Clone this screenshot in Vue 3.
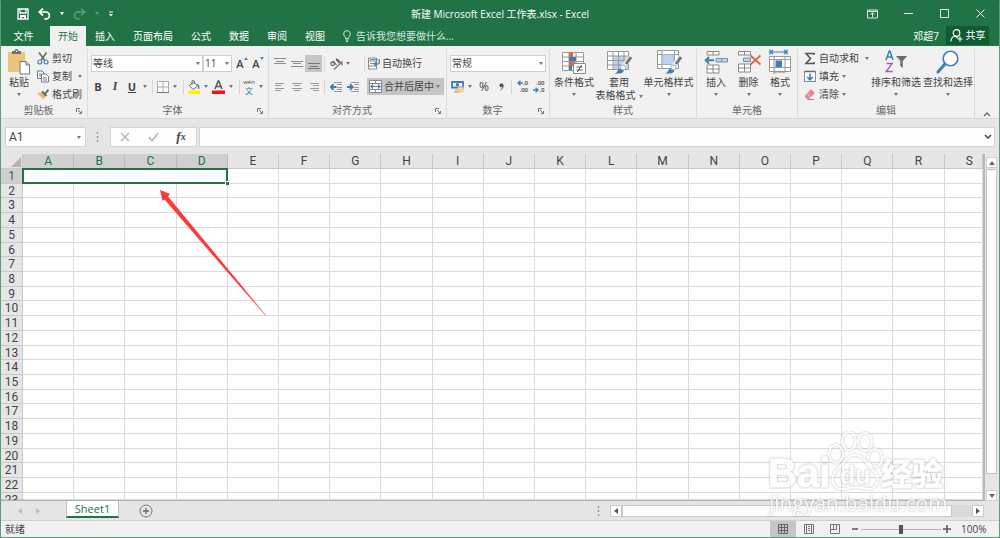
<script setup>
import { ref } from 'vue'

const menuTabs = ['文件', '开始', '插入', '页面布局', '公式', '数据', '审阅', '视图']
const activeTab = ref('开始')
const columns = 'ABCDEFGHIJKLMNOPQRS'.split('')
const rowCount = 23
const isSelectedColumn = (c) => c < 4
const fontName = ref('等线')
const fontSize = ref('11')
const numberFormat = ref('常规')
const formula = ref('')
const cellName = ref('A1')
const zoomLevel = ref(100)
</script>

<template>
  <div class="window">
    <header class="titlebar">
      <div class="quick">
        <button aria-label="保存">
          <svg width="12" height="12" viewBox="0 0 12 12"><path d="M1 1h10v10H1zM3 1v4h6V1" fill="none" stroke="#fff" stroke-width="1.3" /><path d="M3 7h6v4H7V9H5v2H3z" fill="#fff" /></svg>
        </button>
        <button aria-label="撤消">
          <svg width="13" height="12" viewBox="0 0 13 12"><path d="M2 4h6a3.4 3.4 0 0 1 0 6.800H6.500" fill="none" stroke="#fff" stroke-width="1.700" /><path d="M5 .5 1.200 4 5 7.500" fill="none" stroke="#fff" stroke-width="1.700" /></svg>
        </button>
        <button class="caret light" aria-label="撤消列表"></button>
        <button class="faded" aria-label="恢复">
          <svg width="13" height="12" viewBox="0 0 13 12"><path d="M11 4H5a3.400 3.400 0 0 0 0 6.800h1.500M8 .5 11.800 4 8 7.500" fill="none" stroke="#fff" stroke-width="1.400" /></svg>
        </button>
        <button class="caret light faded" aria-label="恢复列表"></button>
        <button aria-label="自定义快速访问工具栏">
          <svg width="6" height="6" viewBox="0 0 6 6"><path d="M1 1h4" stroke="#fff" /><path d="M1 3h4L3 5.500z" fill="#fff" /></svg>
        </button>
      </div>
      <h1>新建 Microsoft Excel 工作表.xlsx - Excel</h1>
      <div class="controls">
        <button aria-label="功能区显示选项">
          <svg width="11" height="10" viewBox="0 0 11 10"><path d="M.5 1h10v8H.5zM.5 2.500h10M5.500 8V4M3.500 5.700l2-2 2 2" fill="none" stroke="#dcebe3" /></svg>
        </button>
        <button aria-label="最小化">
          <svg width="9" height="10" viewBox="0 0 9 10"><path d="M0 4.500h9" stroke="#dcebe3" /></svg>
        </button>
        <button aria-label="最大化">
          <svg width="9" height="10" viewBox="0 0 9 10"><path d="M.5.500h8v8h-8z" fill="none" stroke="#dcebe3" /></svg>
        </button>
        <button aria-label="关闭">
          <svg width="9" height="10" viewBox="0 0 9 10"><path d="m.5.500 8 8m0-8-8 8" stroke="#e6f1eb" /></svg>
        </button>
      </div>
    </header>

    <nav class="tabs">
      <button v-for="tab in menuTabs" :key="tab" :class="{ active: tab === activeTab, file: tab === '文件' }" @click="activeTab = tab">{{ tab }}</button>
      <button class="tell">
        <svg width="8" height="12" viewBox="0 0 8 12"><path d="M2.500 8.500C2.500 6.500.7 6 .7 3.900a3.300 3.300 0 0 1 6.600 0c0 2.100-1.800 2.600-1.800 4.600zM2.500 10h3M3 11.500h2" fill="none" stroke="#d4e6db" /></svg>
        告诉我您想要做什么...
      </button>
      <span class="user">邓超7</span>
      <button class="share">
        <svg width="13" height="13" viewBox="0 0 13 13"><circle cx="6.500" cy="4" r="3.300" fill="none" stroke="#fff" stroke-width="1.200" /><path d="M.8 12.500c.3-3 1.700-5 4.200-5.500l3 2M10 7.500v5M7.500 10H12.500" fill="none" stroke="#fff" stroke-width="1.200" /></svg>
        共享
      </button>
    </nav>

    <section class="ribbon">
      <div class="group">
        <div class="body clipboard">
          <button class="big">
            <svg width="24" height="26" viewBox="0 0 24 26"><rect x="1" y="3" width="17" height="20" rx="1" fill="#ecc57c" /><path d="M5 2h2.500a2 2 0 0 1 4 0H14v3H5z" fill="#707070" /><circle cx="9.500" cy="2.300" r=".8" fill="#f1f1f1" /><path d="M13 12.500h6l3.500 3.500v9H13zM19 12.500V16h3.500" fill="#fff" stroke="#777" /></svg>
            <span>粘贴</span><i class="caret"></i>
          </button>
          <div class="stack">
            <button>
              <svg width="12" height="13" viewBox="0 0 12 13"><path d="m2 .5 5.700 7.800M9.500.5 4 8.300" stroke="#666" stroke-width="1.500" /><circle cx="2.800" cy="10" r="2" fill="none" stroke="#4c84bd" stroke-width="1.200" /><circle cx="9" cy="10" r="2" fill="none" stroke="#4c84bd" stroke-width="1.200" /></svg>剪切
            </button>
            <button>
              <svg width="12" height="13" viewBox="0 0 12 13"><path d="M.5 1h4.500l2 2v5.500H.5z" fill="#fff" stroke="#777" /><path d="M4.500 4h4.500l2.500 2.500V12h-7z" fill="#fff" stroke="#777" /><path d="M2 4h2M2 6h2M6 8h4M6 10h4" stroke="#4c84bd" /></svg>复制<i class="caret gap"></i>
            </button>
            <button>
              <svg width="12" height="13" viewBox="0 0 12 13"><path d="m0 5 6.500 6.500 2-4-3-3z" fill="#ecb765" /><path d="m5 3.500 4.500 4.500M8 6l3.500-4.500" fill="none" stroke="#666" stroke-width="2" /></svg>格式刷
            </button>
          </div>
        </div>
        <footer><span>剪贴板</span><button class="launcher" aria-label="剪贴板选项"><svg width="6" height="6" viewBox="0 0 6 6"><path d="M.5 4V.5H4M2 2l3 3M5.500 3v2.500H3" fill="none" stroke="#777" /></svg></button></footer>
      </div>

      <div class="group">
        <div class="body rows">
          <div class="font-one">
            <label class="pick"><select v-model="fontName" aria-label="字体"><option>等线</option><option>宋体</option></select><i class="caret"></i></label>
            <label class="pick"><select v-model="fontSize" aria-label="字号"><option>11</option><option>12</option></select><i class="caret"></i></label>
            <button class="grow" aria-label="增大字号">A<svg width="4" height="4" viewBox="0 0 4 4"><path d="M0 3h4L2 0z" fill="#4b86c0" /></svg></button>
            <button class="grow" aria-label="减小字号">A<svg width="4" height="4" viewBox="0 0 4 4"><path d="M0 0h4L2 3z" fill="#4b86c0" /></svg></button>
          </div>
          <div class="font-two">
            <button class="letter"><b>B</b></button>
            <button class="letter italic"><b>I</b></button>
            <button class="letter under"><b>U</b></button>
            <button class="caret" aria-label="下划线样式"></button>
            <i class="sep"></i>
            <button aria-label="边框"><svg width="12" height="12" viewBox="0 0 12 12"><path d="M.5.5h11v11H.5zM6 .5v11M.5 6h11" fill="#fff" stroke="#aaa" /><path d="M0 11.500h12" stroke="#777" /></svg></button>
            <button class="caret" aria-label="边框样式"></button>
            <i class="sep"></i>
            <button aria-label="填充颜色"><svg width="14" height="14" viewBox="0 0 14 14"><path d="m2.500 5.500 4-3.500 4 4-4.500 3.500z" fill="#fff" stroke="#666" /><path d="M5 5V1.500c0-1.500 2.500-1.500 2.500 0V4" fill="none" stroke="#666" /><path d="M10 4.500c2 .5 2 3 1.500 4.500" fill="none" stroke="#4b86c0" stroke-width="1.500" /><path d="M1 10.500h12V14H1z" fill="#fff200" /></svg></button>
            <button class="caret" aria-label="填充颜色列表"></button>
            <button aria-label="字体颜色"><svg width="13" height="14" viewBox="0 0 13 14"><path d="m3 9 3.200-8h.6L10 9M4 6.500h5" fill="none" stroke="#555" stroke-width="1.500" /><path d="M0 10.500h13V14H0z" fill="#f01414" /></svg></button>
            <button class="caret" aria-label="字体颜色列表"></button>
            <i class="sep"></i>
            <button class="pinyin" aria-label="拼音"><small>wén</small><em>文</em></button>
            <button class="caret" aria-label="拼音选项"></button>
          </div>
        </div>
        <footer><span>字体</span><button class="launcher" aria-label="字体选项"><svg width="6" height="6" viewBox="0 0 6 6"><path d="M.5 4V.5H4M2 2l3 3M5.500 3v2.500H3" fill="none" stroke="#777" /></svg></button></footer>
      </div>

      <div class="group">
        <div class="body rows">
          <div class="align-one">
            <button aria-label="顶端对齐"><svg width="12" height="12" viewBox="0 0 12 12"><path d="M0 .500h12M2 3.500h8M0 5.500h12" stroke="#8a8a8a" /></svg></button>
            <button aria-label="垂直居中"><svg width="12" height="12" viewBox="0 0 12 12"><path d="M0 3.500h12M2 5.500h8M0 8.500h12" stroke="#8a8a8a" /></svg></button>
            <button class="on" aria-label="底端对齐"><svg width="12" height="12" viewBox="0 0 12 12"><path d="M0 5.500h12M2 8.500h8M0 10.500h12" stroke="#777" /></svg></button>
            <i class="sep"></i>
            <button aria-label="方向"><svg width="13" height="12" viewBox="0 0 13 12"><path d="m4 11.500 8-7.500M8.500 4H12v3.500" fill="none" stroke="#777" stroke-width="1.200" /><circle cx="2.700" cy="5.700" r="1.800" fill="none" stroke="#555" stroke-width="1.100" /><path d="m3 3 3.500 4M6 .5l3.500 5M6 2.500c2.500-2 4 .5 2.500 2.500" fill="none" stroke="#555" stroke-width="1.100" /></svg></button>
            <button class="caret" aria-label="方向选项"></button>
            <i></i><i class="sep"></i>
            <button class="wide"><svg width="12" height="13" viewBox="0 0 12 13"><path d="M.5 1h8v11h-8zM.5 4h8M.5 9h8" fill="#fff" stroke="#888" /><path d="M2 2.500h8M2 6.500h5" fill="none" stroke="#888" /><path d="M11.300 2v3.500c0 1-.7 1.500-1.500 1.500H6.500M8.500 4.800l-2.200 2.200 2.200 2.200" fill="none" stroke="#4b86c0" stroke-width="1.300" /></svg>自动换行</button>
          </div>
          <div class="align-two">
            <button aria-label="左对齐"><svg width="10" height="10" viewBox="0 0 10 10"><path d="M0 1.500h9M0 3.500h6M0 6.500h9M0 8.500h6" stroke="#999" /></svg></button>
            <button aria-label="居中"><svg width="10" height="10" viewBox="0 0 10 10"><path d="M0 1.500h10M2 3.500h6M0 6.500h10M2 8.500h6" stroke="#999" /></svg></button>
            <button aria-label="右对齐"><svg width="10" height="10" viewBox="0 0 10 10"><path d="M1 1.500h9M4 3.500h6M1 6.500h9M4 8.500h6" stroke="#999" /></svg></button>
            <i class="sep"></i>
            <button aria-label="减少缩进量"><svg width="12" height="12" viewBox="0 0 12 12"><path d="M4 1.500h8M7 3.500h5M7 6.500h5M7 8.500h5M4 10.500h8" stroke="#999" /><path d="M6.500 6H1M3.500 3.200.8 6l2.700 2.800" fill="none" stroke="#3f7cb8" stroke-width="1.900" /></svg></button>
            <button aria-label="增加缩进量"><svg width="12" height="12" viewBox="0 0 12 12"><path d="M4 1.500h8M7 3.500h5M7 6.500h5M7 8.500h5M4 10.500h8" stroke="#999" /><path d="M0 6h5.500M3 3.200 5.700 6 3 8.800" fill="none" stroke="#3f7cb8" stroke-width="1.900" /></svg></button>
            <i></i>
            <button class="wide on"><svg width="13" height="13" viewBox="0 0 13 13"><path d="M.5.500h12v12H.5zM.5 3.500h12M.5 9.500h12M6.500.500v3M6.500 9.500v3" fill="#fff" stroke="#888" /><path d="M2 6.500h9M4 4.500l-2 2 2 2M9 4.500l2 2-2 2" fill="none" stroke="#3f7cb8" stroke-width="1.200" /></svg>合并后居中<i class="caret near"></i></button>
          </div>
        </div>
        <footer><span>对齐方式</span><button class="launcher" aria-label="对齐选项"><svg width="6" height="6" viewBox="0 0 6 6"><path d="M.5 4V.5H4M2 2l3 3M5.500 3v2.500H3" fill="none" stroke="#777" /></svg></button></footer>
      </div>

      <div class="group">
        <div class="body rows">
          <label class="pick"><select v-model="numberFormat" aria-label="数字格式"><option>常规</option><option>数值</option></select><i class="caret"></i></label>
          <div class="number-two">
            <button aria-label="会计数字格式"><svg width="13" height="12" viewBox="0 0 13 12"><path d="M1 1h11v5.500H1z" fill="#fff" stroke="#3f7cb8" stroke-width="1.800" /><circle cx="6.500" cy="3.700" r="1.700" fill="#3f7cb8" /><path d="M7 5.500h5.500V11H7zM3.500 8.500H8V12H3.500z" fill="#edbd78" /><path d="M7 7.500h5M7 9.500h5" stroke="#f7e4c8" /></svg></button>
            <button class="caret" aria-label="会计格式列表"></button>
            <button class="percent">%</button>
            <button aria-label="千位分隔"><svg width="5" height="8" viewBox="0 0 5 8"><circle cx="2.500" cy="2.300" r="2" fill="#555" /><path d="M4 2.500c0 2-.7 3.500-2.500 4.500" fill="none" stroke="#555" /></svg></button>
            <i class="sep"></i>
            <button class="decimal" aria-label="增加小数位数"><span><svg width="6" height="6" viewBox="0 0 6 6"><path d="M6 3H1M3.500.7 1 3l2.500 2.300" fill="none" stroke="#3f7cb8" stroke-width="1.400" /></svg>.0</span><span>.00</span></button>
            <button class="decimal" aria-label="减少小数位数"><span>.00</span><span><svg width="6" height="6" viewBox="0 0 6 6"><path d="M0 3h5M2.500.7 5 3 2.500 5.300" fill="none" stroke="#3f7cb8" stroke-width="1.400" /></svg>.0</span></button>
          </div>
        </div>
        <footer><span>数字</span><button class="launcher" aria-label="数字选项"><svg width="6" height="6" viewBox="0 0 6 6"><path d="M.5 4V.5H4M2 2l3 3M5.500 3v2.500H3" fill="none" stroke="#777" /></svg></button></footer>
      </div>

      <div class="group">
        <div class="body styles">
          <button class="big">
            <svg width="26" height="26" viewBox="0 0 26 26"><path d="M1.500 3.500h21v18h-21zM1.500 8h21M1.500 12.500h21M1.500 17h21M8 3.500v18M15 3.500v18" fill="#fff" stroke="#999" /><path d="M8 3.500h4V8H8zM8 12.500h6V17H8z" fill="#dd6742" /><path d="M8 8h7v4H8zM8 17h3v4H8z" fill="#3f7cb8" /><path d="M12.500 14.500h12v10h-12z" fill="#fff" stroke="#888" /><path d="M15.500 18h6M15.500 21h6M20.500 16l-4 7" stroke="#555" /></svg>
            <span>条件格式</span><i class="caret"></i>
          </button>
          <button class="big">
            <svg width="26" height="26" viewBox="0 0 26 26"><path d="M1.500 2.500h21v18h-21z" fill="#fff" /><path d="M7 7h15v13H7z" fill="#bed3e9" /><path d="M1.500 2.500h21v18h-21zM1.500 7h21M1.500 11.500h21M1.500 16h21M7 2.500v18M12.500 2.500v18M18 2.500v18" fill="none" stroke="#999" /><path d="m25 8-8 10" stroke="#f1f1f1" stroke-width="5" /><path d="m25 8-5 7" stroke="#777" stroke-width="3" /><path d="M8 24.500c3.500 0 4-5.500 7.500-5.500 2.500 0 3 3 1 4.500s-5 1-8.500 1z" fill="#3f7cb8" /><circle cx="17" cy="18.500" r="2.500" fill="#fff" stroke="#8ab0d6" /></svg>
            <span>套用<br />表格格式<i class="caret inline"></i></span>
          </button>
          <button class="big">
            <svg width="26" height="26" viewBox="0 0 26 26"><path d="M1.500 1.500h21v18h-21zM1.500 5.500h21M1.500 15.500h21M6 1.500v18M18.500 1.500v18" fill="#fff" stroke="#999" /><path d="M6 5.500h12v10H6z" fill="#bed3e9" stroke="#9db4ca" /><path d="m25 8-8 10" stroke="#f1f1f1" stroke-width="5" /><path d="m25 8-5 7" stroke="#777" stroke-width="3" /><path d="M8.500 24.500c3.500 0 4-5.500 7.500-5.500 2.500 0 3 3 1 4.500s-5 1-8.500 1z" fill="#3f7cb8" /><circle cx="17.500" cy="18.500" r="2.500" fill="#fff" stroke="#8ab0d6" /></svg>
            <span>单元格样式</span><i class="caret"></i>
          </button>
        </div>
        <footer class="plain"><span>样式</span></footer>
      </div>

      <div class="group">
        <div class="body cells">
          <button class="big">
            <svg width="24" height="26" viewBox="0 0 24 26"><path d="M3 2.500h12v3.500H3zM9 2.500V6M3 16h12v8H3zM3 20h12M9 16v8" fill="#fff" stroke="#888" /><path d="M12 9.500h11.500v3.500H12zM17.700 9.500V13" fill="#bed3e9" stroke="#6e93b8" /><path d="M10 11.300H2M5 8l-3.300 3.300L5 14.600" fill="none" stroke="#3f7cb8" stroke-width="2" /></svg>
            <span>插入</span><i class="caret"></i>
          </button>
          <button class="big">
            <svg width="24" height="26" viewBox="0 0 24 26"><path d="M1.500 2.500h12v3.500h-12zM7.500 2.500V6M1.500 15h12v8h-12zM1.500 19h12M7.500 15v8" fill="#fff" stroke="#888" /><path d="M6.500 9h7v3.500h-7z" fill="#bed3e9" stroke="#6e93b8" /><path d="m13.500 6.500 10 9m0-9-10 9" stroke="#de6440" stroke-width="1.800" /></svg>
            <span>删除</span><i class="caret"></i>
          </button>
          <button class="big">
            <svg width="24" height="26" viewBox="0 0 24 26"><path d="M2 3h17M2 .5v5M19 .5v5M5 1 2.500 3 5 5M16 1l2.500 2L16 5" fill="none" stroke="#3f7cb8" stroke-width="1.200" /><path d="M1.500 7.500h21v15h-21zM1.500 10.500h21M1.500 18.500h21M6 7.500v15M17 7.500v15" fill="#fff" stroke="#999" /><path d="M7.500 11.500H14V18H7.500z" fill="#3f7cb8" /><path d="M5 24c2 1 3-2 4-1h5c2 0 2 2 4-1" fill="none" stroke="#888" /></svg>
            <span>格式</span><i class="caret"></i>
          </button>
        </div>
        <footer class="plain"><span>单元格</span></footer>
      </div>

      <div class="group">
        <div class="body editing">
          <div class="stack">
            <button><svg width="12" height="13" viewBox="0 0 12 13"><path d="M10 3V1.500H2L6.500 6.500 2 11.500h8V10" fill="none" stroke="#555" stroke-width="1.600" /></svg>自动求和<i class="caret gap"></i></button>
            <button><svg width="12" height="13" viewBox="0 0 12 13"><path d="M.5 1.500h11v10H.5z" fill="#fff" stroke="#888" /><path d="M.5 1.500h11" stroke="#666" stroke-width="1.500" /><path d="M6 3.500V10M3.200 7 6 9.800 8.800 7" fill="none" stroke="#3f7cb8" stroke-width="1.600" /></svg>填充<i class="caret near"></i></button>
            <button><svg width="12" height="13" viewBox="0 0 12 13"><path d="M1 7.500 7 1l4 4-6 6H3L1 9z" fill="#e9859a" /><path d="m3 5.500 4 4" stroke="#f8ccd5" /><path d="M3.500 11.500H10" stroke="#888" /></svg>清除<i class="caret near"></i></button>
          </div>
          <button class="big">
            <svg width="24" height="26" viewBox="0 0 24 26"><path d="m2 11 3.300-9h.6L9 11M3 8h5.500" fill="none" stroke="#3f7cb8" stroke-width="1.500" /><path d="M2.500 14.500h5.700l-6 8h6.500" fill="none" stroke="#9a63b8" stroke-width="1.400" /><path d="M12 7h11l-4.200 5v7l-2.600-2v-5z" fill="#6b6b6b" /><path d="M14.500 8.500 17 12v3" fill="none" stroke="#999" /></svg>
            <span>排序和筛选</span><i class="caret"></i>
          </button>
          <button class="big">
            <svg width="24" height="26" viewBox="0 0 24 26"><path d="m9 15-7 8" stroke="#3f7cb8" stroke-width="3" stroke-linecap="round" /><circle cx="14.500" cy="9.500" r="7.300" fill="#fff" stroke="#3f7cb8" stroke-width="1.600" /></svg>
            <span>查找和选择</span><i class="caret"></i>
          </button>
        </div>
        <footer class="plain"><span>编辑</span></footer>
      </div>
      <button class="collapse" aria-label="折叠功能区"><svg width="8" height="6" viewBox="0 0 8 6"><path d="m1 5 3-3 3 3" fill="none" stroke="#666" stroke-width="1.300" /></svg></button>
    </section>

    <section class="formula">
      <label class="pick name"><input v-model="cellName" aria-label="名称框" /><i class="caret"></i></label>
      <svg class="grip" width="3" height="10" viewBox="0 0 3 10"><path d="M1.500 0v2M1.500 4v2M1.500 8v2" stroke="#999" stroke-width="1.500" /></svg>
      <div class="actions">
        <button aria-label="取消"><svg width="10" height="10" viewBox="0 0 10 10"><path d="m1 1 8 8m0-8-8 8" stroke="#b5b5b5" stroke-width="1.400" /></svg></button>
        <button aria-label="输入"><svg width="11" height="10" viewBox="0 0 11 10"><path d="m1 5 3 3.500L10 1.500" fill="none" stroke="#b5b5b5" stroke-width="1.700" /></svg></button>
        <button class="fx" aria-label="插入函数">f<small>x</small></button>
      </div>
      <label class="entry"><input v-model="formula" aria-label="编辑栏" /><svg width="8" height="6" viewBox="0 0 8 6"><path d="m1 1 3 3 3-3" fill="none" stroke="#555" stroke-width="1.700" /></svg></label>
    </section>

    <main class="sheet">
      <div class="canvas">
        <table>
          <thead>
            <tr>
              <th class="corner" aria-label="全选"><svg width="10" height="10" viewBox="0 0 10 10"><path d="M10 0v10H0z" fill="#b4b4b4" /></svg></th>
              <th v-for="(c, i) in columns" :key="c" scope="col" :class="{ sel: isSelectedColumn(i), partial: i === columns.length - 1 }">{{ c }}</th>
            </tr>
          </thead>
          <tbody>
            <tr v-for="r in rowCount" :key="r">
              <th scope="row" :class="{ sel: r === 1 }">{{ r }}</th>
              <template v-if="r === 1">
                <td class="merged"><i class="handle"></i></td>
                <td v-for="c in 15" :key="c"></td>
              </template>
              <template v-else>
                <td v-for="c in columns" :key="c"></td>
              </template>
            </tr>
          </tbody>
        </table>
        <svg class="arrow" width="108" height="128" viewBox="0 0 108 128">
          <defs><linearGradient id="fade" gradientUnits="userSpaceOnUse" x1="60" y1="70" x2="107" y2="127"><stop offset="0" stop-color="#fb3a3a" /><stop offset=".5" stop-color="#fb3a3a" /><stop offset="1" stop-color="#fb3a3a" stop-opacity=".5" /></linearGradient></defs>
          <path d="m1 1 10 4-2 2.500L107 126l-1 .5L5.500 10.500 3.500 12z" fill="url(#fade)" />
        </svg>
      </div>
      <div class="vscroll">
        <button aria-label="向上滚动"><svg width="6" height="4" viewBox="0 0 6 4"><path d="M0 4h6L3 0z" fill="#666" /></svg></button>
        <div class="thumb"></div>
        <button aria-label="向下滚动"><svg width="6" height="4" viewBox="0 0 6 4"><path d="M0 0h6L3 4z" fill="#666" /></svg></button>
      </div>
    </main>

    <section class="sheetbar">
      <button class="step" aria-label="上一张"><svg width="4" height="6" viewBox="0 0 4 6"><path d="M4 0v6L0 3z" fill="#bcbcbc" /></svg></button>
      <button class="step" aria-label="下一张"><svg width="4" height="6" viewBox="0 0 4 6"><path d="M0 0v6l4-3z" fill="#bcbcbc" /></svg></button>
      <button class="sheet-tab">Sheet1</button>
      <button class="add" aria-label="新工作表"><svg width="14" height="14" viewBox="0 0 14 14"><circle cx="7" cy="7" r="6" fill="none" stroke="#777" /><path d="M7 4v6M4 7h6" stroke="#666" stroke-width="1.300" /></svg></button>
      <svg class="grip" width="3" height="10" viewBox="0 0 3 10"><path d="M1.500 0v2M1.500 4v2M1.500 8v2" stroke="#999" stroke-width="1.500" /></svg>
      <div class="hscroll">
        <button aria-label="向左滚动"><svg width="4" height="6" viewBox="0 0 4 6"><path d="M4 0v6L0 3z" fill="#555" /></svg></button>
        <div class="thumb"></div>
        <button aria-label="向右滚动"><svg width="4" height="6" viewBox="0 0 4 6"><path d="M0 0v6l4-3z" fill="#555" /></svg></button>
      </div>
    </section>

    <footer class="status">
      <span>就绪</span>
      <div class="views">
        <button class="on" aria-label="普通"><svg width="10" height="10" viewBox="0 0 10 10"><path d="M.5.5h9v9h-9zM3.500.500v9M6.500.500v9M.5 3.500h9M.5 6.500h9" fill="none" stroke="#666" /></svg></button>
        <button aria-label="页面布局视图"><svg width="10" height="10" viewBox="0 0 10 10"><path d="M.5.5h9v9h-9zM2.500.500v9M7.500.500v9M4 2.500h2M4 4.500h2M4 6.500h2" fill="none" stroke="#777" /></svg></button>
        <button aria-label="分页预览"><svg width="10" height="10" viewBox="0 0 10 10"><path d="M.5.5h9v9h-9zM3.500.500v5M6.500.500v5M.5 5.500h6" fill="none" stroke="#777" /></svg></button>
      </div>
      <button aria-label="缩小"><svg width="8" height="8" viewBox="0 0 8 8"><path d="M1 4h6" stroke="#555" stroke-width="1.500" /></svg></button>
      <input v-model="zoomLevel" type="range" min="0" max="200" aria-label="显示比例" />
      <button aria-label="放大"><svg width="8" height="8" viewBox="0 0 8 8"><path d="M0 4h8M4 0v8" stroke="#555" stroke-width="1.500" /></svg></button>
      <output>{{ zoomLevel }}%</output>
    </footer>

    <svg class="watermark" width="184" height="88" viewBox="0 0 184 88">
      <g class="paw">
        <ellipse cx="71" cy="23" rx="7" ry="9" /><ellipse cx="84" cy="10" rx="7" ry="9" /><ellipse cx="100" cy="11" rx="7" ry="9" /><ellipse cx="110" cy="27" rx="7" ry="9" />
        <path d="M90 24c8 0 11 8 17 14 10 10 5 21-5 20-8-2-15-2-23 0-11 1-16-10-6-20 6-6 9-14 17-14z" />
      </g>
      <g class="words">
        <text x="3" y="56" class="brand">Bai</text><text x="75" y="53" class="du">du</text><text x="116" y="54" class="cn">经验</text>
        <text x="4" y="80" class="url">jingyan.baidu.com</text>
      </g>
    </svg>
  </div>
</template>

<style>
body { margin: 0; }
</style>

<style scoped>
* { box-sizing: border-box; }
.window { position: relative; display: flex; flex-direction: column; height: 100vh; overflow: hidden; border: 1px solid #5f9c79; border-top-color: #217346; background: #e6e6e6; color: #444; font: 10px/13px "Open Sans", "Noto Sans CJK SC", sans-serif; }
button, input, select { margin: 0; padding: 0; border: 0; border-radius: 0; background: none; color: inherit; font: inherit; outline: 0; }
button { display: flex; align-items: center; justify-content: center; white-space: nowrap; }
svg { display: block; flex: none; }
.caret { display: flex; align-items: center; justify-content: center; flex: none; }
.caret::after { content: ""; border: 2px solid transparent; border-top: 3px solid #777; border-bottom: 0; }
.caret.light::after { border-top-color: #fff; }
.faded { opacity: .3; }

.titlebar { display: grid; grid-template-columns: 1fr auto 1fr; align-items: center; height: 25px; flex: none; background: #217346; color: #fff; }
.titlebar h1 { margin: 0; font-size: 10px; font-weight: 400; line-height: 14px; }
.quick { display: grid; grid-template-columns: 13px 13px 4px 13px 4px 6px; gap: 9px; padding-left: 15px; align-items: center; }
.controls { display: grid; grid-template-columns: repeat(4, 36px); justify-content: end; padding-right: 1px; }
.controls button { height: 24px; }

.tabs { display: flex; align-items: stretch; height: 20px; flex: none; background: #217346; color: #fff; }
.tabs > button { padding: 0 9px; }
.tabs > .file { width: 49px; padding: 0 4px 0 0; }
.tabs > .active { padding: 0 8px; background: #f1f1f1; color: #217346; }
.tabs > .tell { gap: 5px; color: #d4e6db; }
.user { margin-left: auto; align-self: center; padding-right: 7px; }
.tabs > .share { gap: 3px; width: 43px; margin: 0 10px 1px 0; padding: 0; background: #0e5c30; }

.ribbon { display: grid; grid-template-columns: 87fr 181fr 178fr 103fr 147fr 101fr 177fr 24fr; height: 73px; flex: none; background: #f1f1f1; border-bottom: 1px solid #d6d6d6; }
.group { display: flex; flex-direction: column; min-width: 0; margin: 3px 0 2px; border-right: 1px solid #dcdcdc; }
.body { height: 54px; flex: none; }
.group footer { display: grid; grid-template-columns: 1fr 11px; align-items: center; text-align: center; line-height: 15px; color: #666; }
.group footer.plain { grid-template-columns: 1fr; }
.launcher { justify-self: start; }
.big { flex-direction: column; justify-content: flex-start; align-self: start; line-height: 13px; }
.big span { margin-top: 1px; text-align: center; }
.big > .caret { height: 10px; }
.caret.inline { display: inline-flex; margin-left: 3px; vertical-align: middle; }
.stack { display: flex; flex-direction: column; }
.stack button { height: 18px; gap: 3px; justify-content: flex-start; }
.caret.gap { margin-left: 3px; }
.caret.gap, .caret.near { width: 4px; }
.sep { width: 1px; height: 14px; background: #d6d6d6; }
.on { background: #c5c5c5; }

.clipboard { display: grid; grid-template-columns: 36px 1fr; }
.rows { display: flex; flex-direction: column; gap: 6px; padding: 6px 3px 0; }
.rows > div { display: grid; height: 17px; align-items: center; justify-items: center; }
.rows .on, .rows .wide { width: 100%; height: 17px; }
.pick { position: relative; display: block; height: 17px; width: 100%; background: #fff; border: 1px solid #cfcfcf; }
.pick select, .pick input { display: block; width: 100%; height: 100%; padding-left: 1px; appearance: none; }
.pick .caret { position: absolute; top: 0; right: 1px; width: 6px; height: 100%; pointer-events: none; }
.rows > .font-one { grid-template-columns: 112px 29px 20px 12px; }
.rows > .font-two { grid-template-columns: 14px 20px 14px 12px 2px 19px 6px 10px 12px 12px 13px 12px 4px 16px 8px; }
.rows > .align-one { grid-template-columns: 16px 17px 17px 4px 20px 4px 12px 4px 78px; }
.rows > .align-two { grid-template-columns: 16px 17px 17px 4px 20px 13px 8px 77px; }
.rows > .number-two { grid-template-columns: 15px 9px 20px 14px 6px 17px 16px; }
.rows .wide { gap: 2px; justify-content: flex-start; padding-left: 2px; }
.grow { align-items: flex-start; font-size: 11px; font-weight: 600; }
.letter { font-size: 11px; }
.italic { font-family: "Liberation Serif", serif; font-size: 12px; font-style: italic; }
.under { text-decoration: underline; }
.pinyin { flex-direction: column; }
.pinyin small { font-size: 6px; line-height: 8px; }
.pinyin em { color: #3f7cb8; font-size: 8px; font-style: normal; line-height: 9px; }
.percent { font-size: 12px; }
.decimal { flex-direction: column; align-items: flex-end; font-size: 6px; line-height: 7px; font-weight: 600; }
.decimal span { display: flex; align-items: center; }
.styles { display: grid; grid-template-columns: 48px 42px 57px; justify-items: center; }
.cells { display: grid; grid-template-columns: 38px 27px 36px; justify-items: center; }
.editing { display: grid; grid-template-columns: 66px 52px 52px; padding-left: 6px; justify-items: start; }
.editing .big { justify-self: center; }
.collapse { align-self: end; margin-bottom: 3px; }

.formula { display: flex; align-items: center; height: 35px; flex: none; padding: 1px 4px 0; }
.formula .pick, .actions, .entry { height: 20px; background: #fdfdfd; border: 1px solid #d4d4d4; }
.formula .name { width: 81px; flex: none; font: 12px/16px Roboto, sans-serif; }
.formula .name input { padding-left: 3px; }
.formula .name .caret { right: 3px; }
.formula .grip { margin: 0 11px 0 10px; }
.actions { display: grid; grid-template-columns: repeat(3, 28px); width: 87px; margin-right: 2px; flex: none; }
.fx { font: italic bold 13px/16px "Liberation Serif", serif; }
.fx small { font-size: 10px; }
.entry { display: flex; flex: 1; align-items: center; padding-right: 2px; }
.entry input { flex: 1; min-width: 0; height: 100%; }

.sheet { display: flex; flex: 1; min-height: 0; }
.canvas { position: relative; flex: 1; min-width: 0; border-right: 2px solid #b9b9b9; border-bottom: 1px solid #b0b0b0; }
table { display: grid; height: 100%; grid-template-columns: 22px repeat(18, minmax(0, 4fr)) minmax(0, 3fr); grid-template-rows: 15px repeat(22, minmax(0, 2fr)) minmax(0, 1fr); overflow: hidden; }
thead, tbody, tr { display: contents; }
th, td { display: block; min-width: 0; min-height: 0; padding: 0; border-right: 1px solid #dadada; border-bottom: 1px solid #dadada; }
td { background: #fff; }
th { background: #e6e6e6; border-color: #c9c9c9; font: 12px/14px Roboto, sans-serif; text-align: center; }
th.sel { background: #d0d0d0; color: #217346; border-right-color: #bcbcbc; }
th.partial { padding-left: 12px; }
.corner { display: flex; align-items: flex-end; justify-content: flex-end; padding: 0 1px 1px 0; }
.merged { position: relative; grid-column: span 4; margin: -1px 0 0 -1px; border: 2px solid #217346; }
.handle { position: absolute; right: -3px; bottom: -3px; width: 4px; height: 4px; background: #217346; border: solid #fff; border-width: 1px 0 0 1px; }
.arrow { position: absolute; left: 158px; top: 35px; }
.vscroll { display: flex; flex-direction: column; width: 14px; padding: 3px 2px 0 1px; gap: 1px; }
.vscroll button { height: 11px; flex: none; background: #fff; border: 1px solid #d0d0d0; }
.vscroll .thumb { flex: 1; margin-bottom: 15px; background: #fff; border: 1px solid #c4c4c4; }

.sheetbar { display: flex; align-items: center; height: 19px; flex: none; }
.step { width: 18px; }
.step:first-child { margin-left: 10px; }
.sheet-tab { align-self: flex-start; width: 53px; height: 17px; margin-left: 19px; background: #fff; border: solid #c0c0c0; border-width: 0 1px 0; border-bottom: 2px solid #217346; color: #217346; font-size: 11px; }
.add { margin-left: 20px; }
.sheetbar .grip { margin-left: auto; margin-right: 10px; }
.hscroll { display: flex; width: 374px; height: 12px; margin-right: 15px; background: #dadada; }
.hscroll button { width: 12px; background: #fff; border: 1px solid #c8c8c8; }
.hscroll .thumb { flex: 1; margin-right: 20px; background: #fff; border: 1px solid #c8c8c8; }

.status { display: flex; align-items: center; height: 17px; flex: none; padding: 0 11px 0 4px; background: #f1f1f1; border-top: 1px solid #cfcfcf; }
.views { display: grid; grid-template-columns: repeat(3, 26px); align-self: stretch; margin-left: auto; margin-right: 3px; }
.status input { width: 80px; height: 10px; margin: 0 2px; appearance: none; background: linear-gradient(#b5b5b5, #b5b5b5) center / 100% 1px no-repeat; }
.status input::-webkit-slider-thumb { appearance: none; width: 4px; height: 9px; border: 0; border-radius: 0; background: #555; }
.status output { margin-left: 10px; width: 27px; }

.watermark { position: absolute; right: 50px; bottom: 18px; pointer-events: none; opacity: .8; }
.paw { fill: none; stroke: #fff; stroke-width: 2px; filter: drop-shadow(0 0 1px #aaa); }
.words { fill: #fff; stroke: #fff; stroke-width: 1px; filter: drop-shadow(0 0 1px #999); }
.brand { font: bold 40px "Liberation Sans", sans-serif; }
.du { font: bold 25px "Liberation Sans", sans-serif; stroke-width: 0; }
.cn { font: bold 31px "Noto Sans CJK SC", sans-serif; }
.words .url { font: 21px "Open Sans", sans-serif; stroke-width: 0; }
</style>
